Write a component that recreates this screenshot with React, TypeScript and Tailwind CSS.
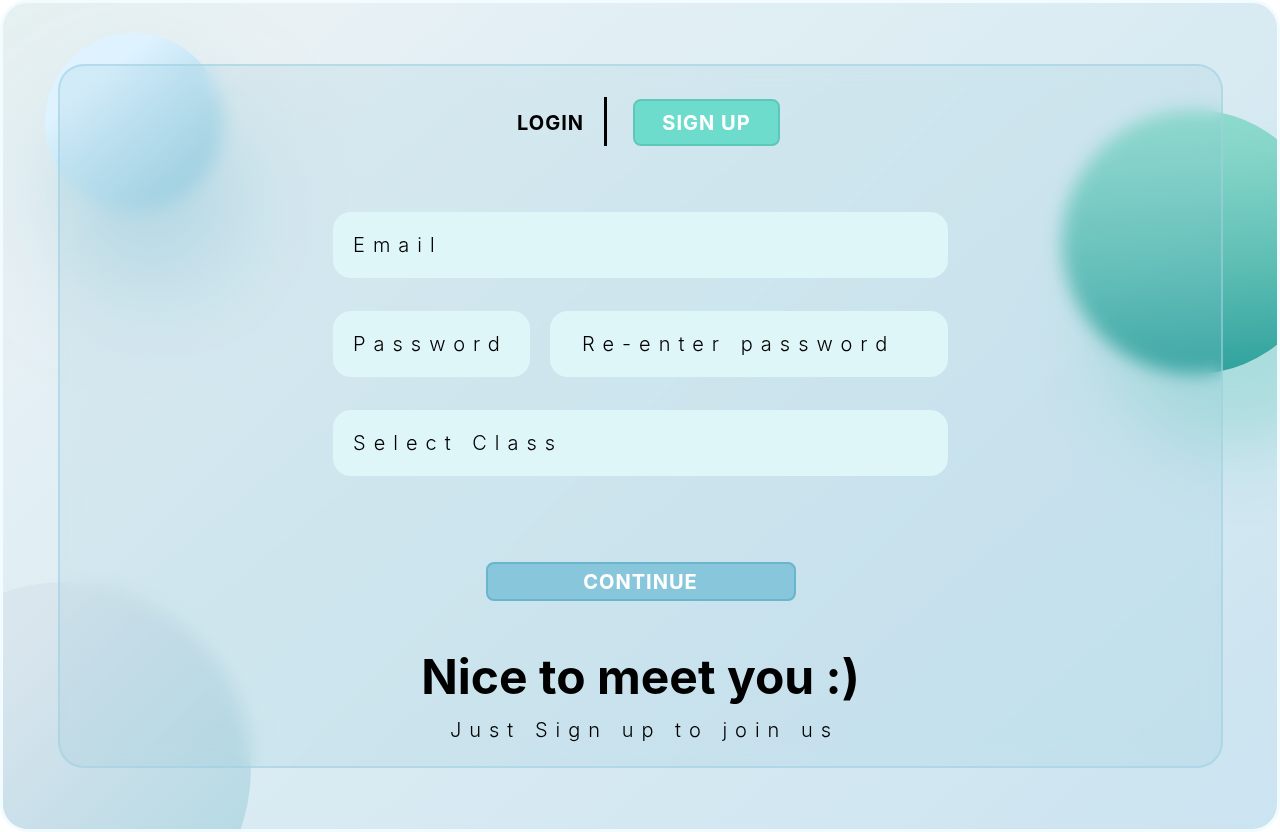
import React from "react";

const field =
  "h-[66px] min-w-0 rounded-[18px] bg-[#dff6f9] font-light text-xl tracking-[8px] text-black outline-none placeholder:text-black placeholder:opacity-100 focus-visible:ring-2 focus-visible:ring-[#69b5ce]";

function Backdrop() {
  return (
    <div aria-hidden="true" className="absolute inset-0">
      <div className="absolute left-[42px] top-[30px] size-[178px] rounded-full bg-[linear-gradient(140deg,#def3ff_0%,#def2ff_28%,#c4e5f4_50%,#a2d3e3_88%)] shadow-[14px_72px_100px_rgba(140,200,220,0.5)]" />
      <div className="absolute -right-[49px] top-[107px] size-[264px] rounded-full bg-[linear-gradient(176deg,#91ddcf_0%,#85d5c8_20%,#5fbfb5_58%,#2da09b_100%)] shadow-[40px_76px_70px_rgba(125,208,198,0.45)]" />
      <div className="absolute -bottom-[125px] -left-[124px] size-[372px] rounded-full bg-[linear-gradient(135deg,#dae6ee_24%,#cbe0ea_50%,#b5dae4_84%)]" />
    </div>
  );
}

export default function App() {
  return (
    <main className="relative flex min-h-screen overflow-hidden rounded-[28px] border-[3px] border-[#f2fbff] bg-[linear-gradient(140deg,#e5f0f1_0%,#e9f1f4_14%,#e3eff5_24%,#deeef3_38%,#d8eaf2_58%,#cbe4f1_100%)] pt-[61px] pr-[54px] pb-[61px] pl-[55px] font-['Inter',sans-serif] text-black">
      <Backdrop />
      <section className="relative flex flex-1 flex-col items-center rounded-[26px] border-2 border-[#a0d1e3]/60 bg-[linear-gradient(135deg,rgba(135,190,207,0.15),rgba(135,195,213,0.17))] pt-[31px] pb-5 backdrop-blur-[9px]">
        <nav className="flex items-end pl-4">
          <button type="button" className="mr-5 h-[47px] text-xl font-bold tracking-[1px]">
            LOGIN
          </button>
          <div className="h-[49px] w-[3px] bg-black" />
          <button
            type="button"
            className="ml-[26px] h-[47px] w-[147px] rounded-lg border-2 border-[#5fc7b9] bg-[#6edccd] text-xl font-bold tracking-[1px] text-white"
          >
            SIGN UP
          </button>
        </nav>

        <form
          className="mt-[66px] flex w-full max-w-[615px] flex-col gap-[33px]"
          onSubmit={(event) => event.preventDefault()}
        >
          <input type="email" aria-label="Email" placeholder="Email" className={`${field} px-5`} />
          <div className="flex gap-5">
            <input
              type="password"
              aria-label="Password"
              placeholder="Password"
              className={`${field} w-[197px] pl-5`}
            />
            <input
              type="password"
              aria-label="Re-enter password"
              placeholder="Re-enter password"
              className={`${field} flex-1 px-8`}
            />
          </div>
          <select aria-label="Select Class" className={`${field} appearance-none px-5`}>
            <option>Select Class</option>
          </select>
          <button
            type="submit"
            className="mt-[53px] h-[39px] w-[310px] self-center rounded-lg border-2 border-[#69b5ce] bg-[#88c6db] text-xl font-bold tracking-[1px] text-white"
          >
            CONTINUE
          </button>
        </form>

        <h1 className="mt-[46px] text-5xl leading-[60px] font-bold">Nice to meet you :)</h1>
        <p className="mt-2 pl-2 text-xl leading-[30px] font-light tracking-[8px]">Just Sign up to join us</p>
      </section>
    </main>
  );
}
